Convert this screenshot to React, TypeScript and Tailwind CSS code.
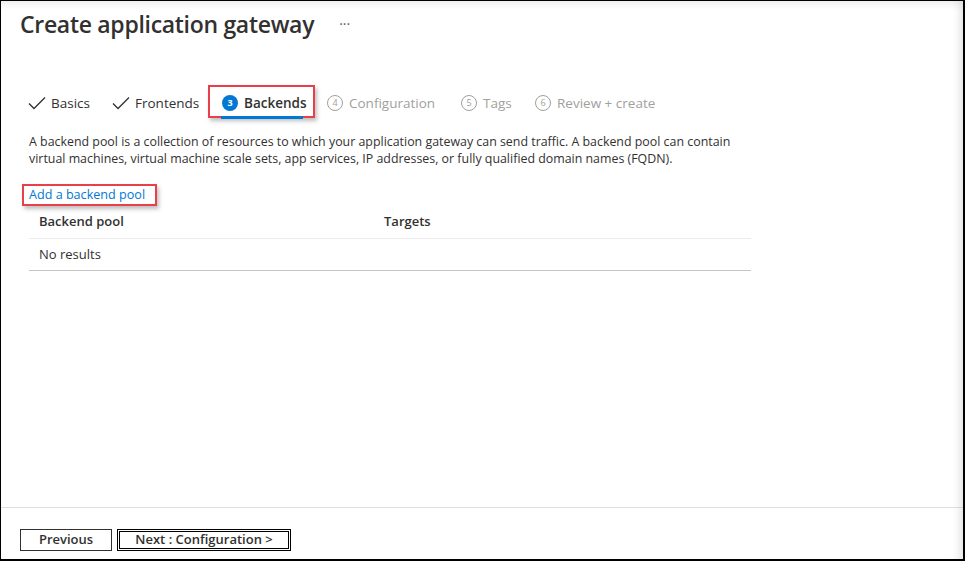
import React from 'react'

const Check = () => (
    <svg width="18" height="14" viewBox="0 0 18 14" className="shrink-0">
        <path d="M1 7.5 L6 12.5 L17 1.5" fill="none" stroke="#323130" strokeWidth="1.3" />
    </svg>
)

const Step: React.FC<{ n: number; active?: boolean }> = ({ n, active }) => (
    <span
        className={
            active
                ? 'w-[16px] h-[16px] rounded-full bg-[#0078d4] text-white text-[9px] font-bold flex items-center justify-center shrink-0'
                : 'w-[16px] h-[16px] rounded-full border border-[#a19f9d] text-[#a19f9d] text-[9px] flex items-center justify-center shrink-0'
        }
    >
        {n}
    </span>
)

const App: React.FC = () => {
    return (
        <div className="w-[965px] h-[561px] bg-white border-l border-t border-b-2 border-r-2 border-black relative overflow-hidden flex flex-col font-['Segoe_UI','Open_Sans',sans-serif] text-[#323130]">
            {/* blade edge shadow */}
            <div className="absolute inset-0 pointer-events-none shadow-[inset_-9px_0_8px_-6px_rgba(0,0,0,0.12),inset_0_9px_8px_-6px_rgba(0,0,0,0.08)]" />

            <div className="flex-1 px-[19px]">
                <div className="flex items-center h-[32px] mt-[7px]">
                    <h1 className="text-[23px] font-semibold tracking-[-0.3px] leading-[32px]">Create application gateway</h1>
                    <span className="ml-[25px] text-[14px] text-[#605e5c] -mt-[1px]">···</span>
                </div>

                {/* tabs */}
                <div className="flex items-center h-[33px] mt-[45px] text-[13.5px]">
                    <div className="w-[84px] ml-[8px] flex items-center gap-[5px] pt-[3px]">
                        <Check />
                        <span>Basics</span>
                    </div>
                    <div className="w-[110px] flex items-center gap-[5px] pt-[3px]">
                        <Check />
                        <span>Frontends</span>
                    </div>
                    <div className="w-[105px] h-full relative flex items-center gap-[6px] pt-[3px]">
                        <div className="absolute -left-[14px] top-0 w-[107px] h-[33px] border-2 border-[#e8404a] shadow-[2px_3px_4px_rgba(0,0,0,0.25)]" />
                        <Step n={3} active />
                        <span className="font-semibold">Backends</span>
                        <div className="absolute left-[-1px] w-[82px] bottom-[-1px] h-[3px] bg-[#0078d4]" />
                    </div>
                    <div className="w-[134px] flex items-center gap-[6px] pt-[3px] text-[#a19f9d]">
                        <Step n={4} />
                        <span>Configuration</span>
                    </div>
                    <div className="w-[74px] flex items-center gap-[6px] pt-[3px] text-[#a19f9d]">
                        <Step n={5} />
                        <span>Tags</span>
                    </div>
                    <div className="flex items-center gap-[6px] pt-[3px] text-[#a19f9d]">
                        <Step n={6} />
                        <span>Review + create</span>
                    </div>
                </div>

                <p className="ml-[9px] mt-[15px] text-[12.4px] leading-[17px] w-[740px]">
                    A backend pool is a collection of resources to which your application gateway can send traffic. A backend pool can contain
                    <br />
                    virtual machines, virtual machine scale sets, app services, IP addresses, or fully qualified domain names (FQDN).
                </p>

                <div className="mt-[17px] ml-[2px] w-[135px] h-[22px] border-2 border-[#e8404a] shadow-[2px_3px_4px_rgba(0,0,0,0.25)] flex items-center pl-[5px]">
                    <a className="text-[12.6px] text-[#0078d4]">Add a backend pool</a>
                </div>

                <div className="ml-[9px] w-[722px] text-[13px]">
                    <div className="grid grid-cols-[345px_1fr] h-[33px] items-center border-b border-[#edebe9] font-semibold">
                        <span className="pl-[10px]">Backend pool</span>
                        <span className="pl-[10px]">Targets</span>
                    </div>
                    <div className="h-[32px] flex items-center pl-[10px] border-b border-[#c8c6c4]">No results</div>
                </div>
            </div>

            <div className="h-[52px] border-t border-[#e1dfdd] flex items-start pt-[21px] px-[19px] gap-[5px] text-[13px]">
                <button className="w-[92px] h-[22px] border border-[#323130] flex items-center justify-center font-semibold">Previous</button>
                <button className="w-[174px] h-[22px] border border-black p-[1px] flex">
                    <span className="flex-1 border border-black flex items-center justify-center font-semibold">Next : Configuration &gt;</span>
                </button>
            </div>
        </div>
    )
}

export default App
